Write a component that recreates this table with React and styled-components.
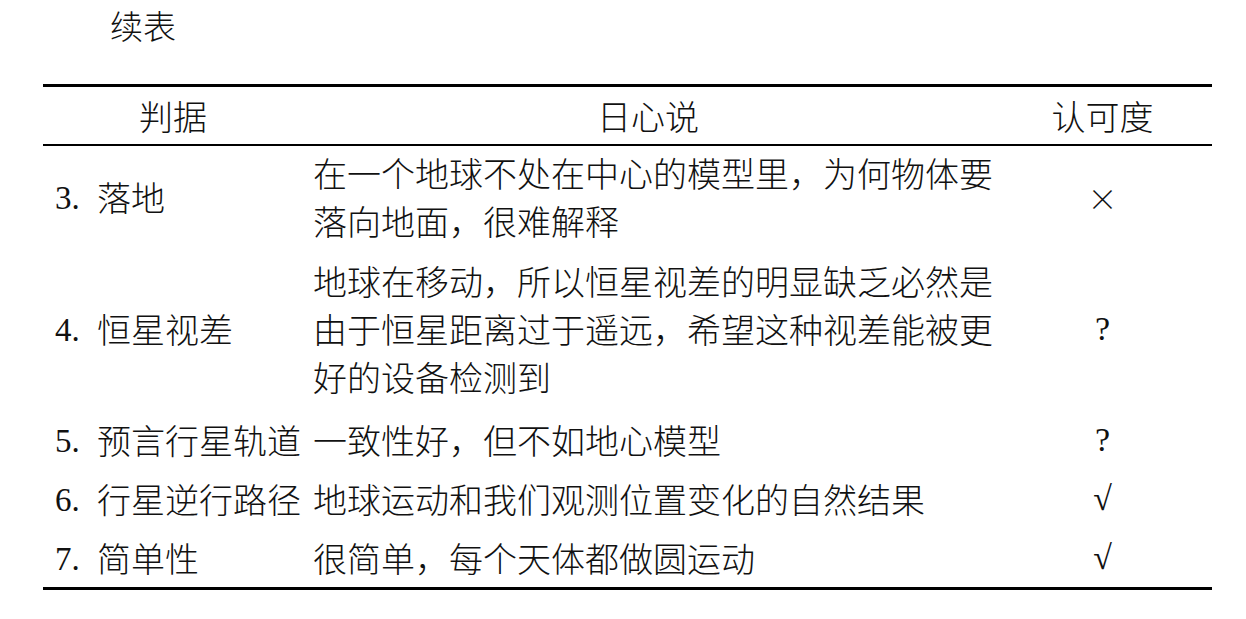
import React from "react";
import styled, { createGlobalStyle } from "styled-components";

const GlobalStyle = createGlobalStyle`
    body {
        margin: 0;
        background: #fff;
        color: #111;
        font-family: "Noto Sans CJK SC", "Noto Sans", sans-serif;
    }
`;

const rows = [
    { num: "3.", name: "落地", lines: ["在一个地球不处在中心的模型里，为何物体要", "落向地面，很难解释"], mark: "×" },
    { num: "4.", name: "恒星视差", lines: ["地球在移动，所以恒星视差的明显缺乏必然是", "由于恒星距离过于遥远，希望这种视差能被更", "好的设备检测到"], mark: "?" },
    { num: "5.", name: "预言行星轨道", lines: ["一致性好，但不如地心模型"], mark: "?" },
    { num: "6.", name: "行星逆行路径", lines: ["地球运动和我们观测位置变化的自然结果"], mark: "√" },
    { num: "7.", name: "简单性", lines: ["很简单，每个天体都做圆运动"], mark: "√" },
];

export default function App() {
    return (
        <Page>
            <GlobalStyle />
            <Title>续表</Title>
            <Table>
                <colgroup>
                    <col style={{ width: 260 }} />
                    <col style={{ width: 690 }} />
                    <col style={{ width: 219 }} />
                </colgroup>
                <thead>
                    <tr>
                        <Th>判据</Th>
                        <Th>日心说</Th>
                        <Th>认可度</Th>
                    </tr>
                </thead>
                <tbody>
                    {rows.map((row, index) => (
                        <Row key={index} $multi={row.lines.length > 1}>
                            <NameCell>
                                <Num>{row.num}</Num>
                                {row.name}
                            </NameCell>
                            <TextCell>
                                {row.lines.map((line, i) => (
                                    <Line key={i}>{line}</Line>
                                ))}
                            </TextCell>
                            <MarkCell>
                                <Mark $kind={row.mark}>{row.mark}</Mark>
                            </MarkCell>
                        </Row>
                    ))}
                </tbody>
            </Table>
        </Page>
    );
}

const Page = styled.div`
    padding: 3px 34px 0 43px;
    width: 1169px;
`;

const Title = styled.div`
    font-size: 33px;
    font-weight: 300;
    line-height: 44px;
    padding-left: 67px;
    height: 81px;
`;

const Table = styled.table`
    width: 1169px;
    table-layout: fixed;
    border-collapse: collapse;
    border-top: 3px solid #000;
    border-bottom: 3px solid #000;
    font-size: 34px;
    font-weight: 300;

    thead tr {
        border-bottom: 2px solid #000;
    }

    td {
        line-height: 48px;
    }
`;

const Row = styled.tr`
    td {
        padding-top: ${(p) => (p.$multi ? "3px" : "6px")};
        padding-bottom: ${(p) => (p.$multi ? "9px" : "5px")};
    }
`;

const Th = styled.th`
    font-weight: 300;
    text-align: center;
    height: 57px;
    padding: 0;
    line-height: 48px;
`;

const NameCell = styled.td`
    padding-left: 12px;
    padding-right: 0;
    white-space: nowrap;
    vertical-align: middle;
`;

const Num = styled.span`
    display: inline-block;
    vertical-align: top;
    width: 42px;
    height: 48px;
    line-height: 50px;
    font-family: "Liberation Serif", serif;
    font-size: 33px;
`;

const TextCell = styled.td`
    padding-left: 10px;
    padding-right: 0;
    white-space: nowrap;
`;

const Line = styled.div`
    height: 48px;
`;

const MarkCell = styled.td`
    text-align: center;
    padding-left: 0;
    padding-right: 0;
`;

const Mark = styled.span`
    display: inline-block;
    vertical-align: top;
    height: 48px;
    line-height: 48px;
    font-family: ${(p) => (p.$kind === "×" ? `"Noto Sans CJK SC", sans-serif` : `"Liberation Serif", serif`)};
    font-size: ${(p) => (p.$kind === "×" ? "30px" : "34px")};
    font-weight: 300;
`;
